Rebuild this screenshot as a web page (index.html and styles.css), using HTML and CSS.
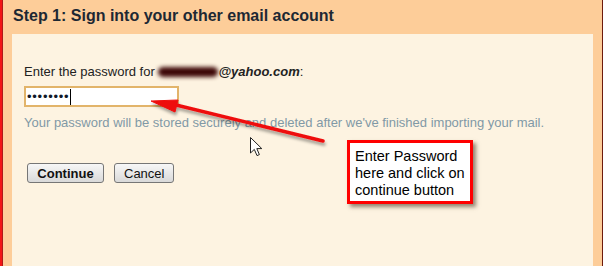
FILE: index.html
```html
<!DOCTYPE html>
<html lang="en">
<head>
    <meta charset="UTF-8">
    <title>Step 1: Sign into your other email account</title>
    <link rel="stylesheet" href="styles.css">
</head>
<body>
    <div class="page">
        <h2 class="step-title">Step 1: Sign into your other email account</h2>
        <div class="panel">
            <div class="field-label">Enter the password for <span class="blurred"></span><b><i>@yahoo.com</i></b>:</div>
            <div class="password-box"><span class="dots">••••••••</span><span class="caret"></span></div>
            <p class="hint">Your password will be stored securely and deleted after we've finished importing your mail.</p>
            <div class="actions">
                <button type="button" class="btn btn-primary">Continue</button>
                <button type="button" class="btn">Cancel</button>
            </div>
        </div>

        <!-- annotations drawn on top of the screenshot -->
        <svg class="arrow" width="604" height="266" viewBox="0 0 604 266">
            <defs>
                <filter id="shade" x="-20%" y="-50%" width="140%" height="200%">
                    <feDropShadow dx="1" dy="3" stdDeviation="1.5" flood-color="#000" flood-opacity="0.35"/>
                </filter>
            </defs>
            <g filter="url(#shade)" fill="#ee1111" stroke="#ee1111">
                <line x1="323" y1="141" x2="172" y2="104" stroke-width="3.5" stroke-linecap="round"/>
                <polygon points="151,101 178,100 175,112" stroke-width="1" stroke-linejoin="round"/>
            </g>
        </svg>
        <svg class="cursor" width="13" height="20" viewBox="0 0 13 20">
            <path d="M0.5 0.5 L0.5 16 L4.3 12.4 L7 18.6 L9.4 17.6 L6.8 11.6 L11.8 11.6 Z" fill="#fff" stroke="#222" stroke-width="1"/>
        </svg>
        <div class="callout">Enter Password<br>here and click on<br>continue button</div>
    </div>
</body>
</html>
```

FILE: styles.css
```css
body {
    margin: 0;
    padding: 0;
    font-family: "Liberation Sans", Arial, sans-serif;
    overflow: hidden;
}
.page {
    position: relative;
    width: 600px;
    height: 266px;
    background-color: #fdcd99;
    border-left: 2px solid #f21515;
    border-right: 1px solid #6e1a0c;
    box-shadow: inset 1px 0 0 #b01818;
    display: flex;
    flex-direction: column;
}
.step-title {
    margin: 0;
    height: 34px;
    line-height: 31px;
    padding-left: 11px;
    font-size: 16px;
    font-weight: bold;
    color: #1d2833;
}
.panel {
    flex: 1;
    margin: 0 9px 0 10px;
    padding: 30px 0 0 12px;
    background-color: #fdf3e1;
    color: #222;
    font-size: 13px;
}
.field-label {
    line-height: 15px;
}
.blurred {
    display: inline-block;
    width: 60px;
    height: 10px;
    vertical-align: -1px;
    background-color: #3d0707;
    border-radius: 5px;
    filter: blur(2.2px);
}
.password-box {
    margin-top: 7px;
    width: 150px;
    height: 17px;
    border: 2px solid #e2b46a;
    background-color: #fff;
    display: flex;
    align-items: center;
    padding-left: 1px;
}
.dots {
    font-size: 13px;
    letter-spacing: 0.75px;
    color: #101828;
}
.caret {
    display: inline-block;
    width: 1px;
    height: 16px;
    background-color: #000;
    margin-left: 1px;
}
.hint {
    margin: 8px 0 0 0;
    line-height: 15px;
    color: #8199a6;
}
.actions {
    margin-top: 33px;
    margin-left: 3px;
    display: flex;
    gap: 10px;
}
.btn {
    height: 20px;
    padding: 0 9px;
    font-family: "Liberation Sans", Arial, sans-serif;
    font-size: 13px;
    color: #111;
    background: linear-gradient(#f7f7f7, #d9d9d9);
    border: 1px solid #767676;
    border-radius: 3px;
}
.btn-primary {
    font-weight: bold;
    width: 77px;
}
.arrow {
    position: absolute;
    left: -2px;
    top: 0;
}
.cursor {
    position: absolute;
    left: 248px;
    top: 137px;
}
.callout {
    position: absolute;
    left: 345px;
    top: 140px;
    width: 115px;
    height: 53px;
    padding: 5px 0 0 5px;
    border: 3px solid #ff0000;
    background-color: #fff;
    box-shadow: 3px 3px 4px rgba(60, 40, 20, 0.55);
    font-size: 14.5px;
    line-height: 17px;
    white-space: nowrap;
    color: #000;
}
```
